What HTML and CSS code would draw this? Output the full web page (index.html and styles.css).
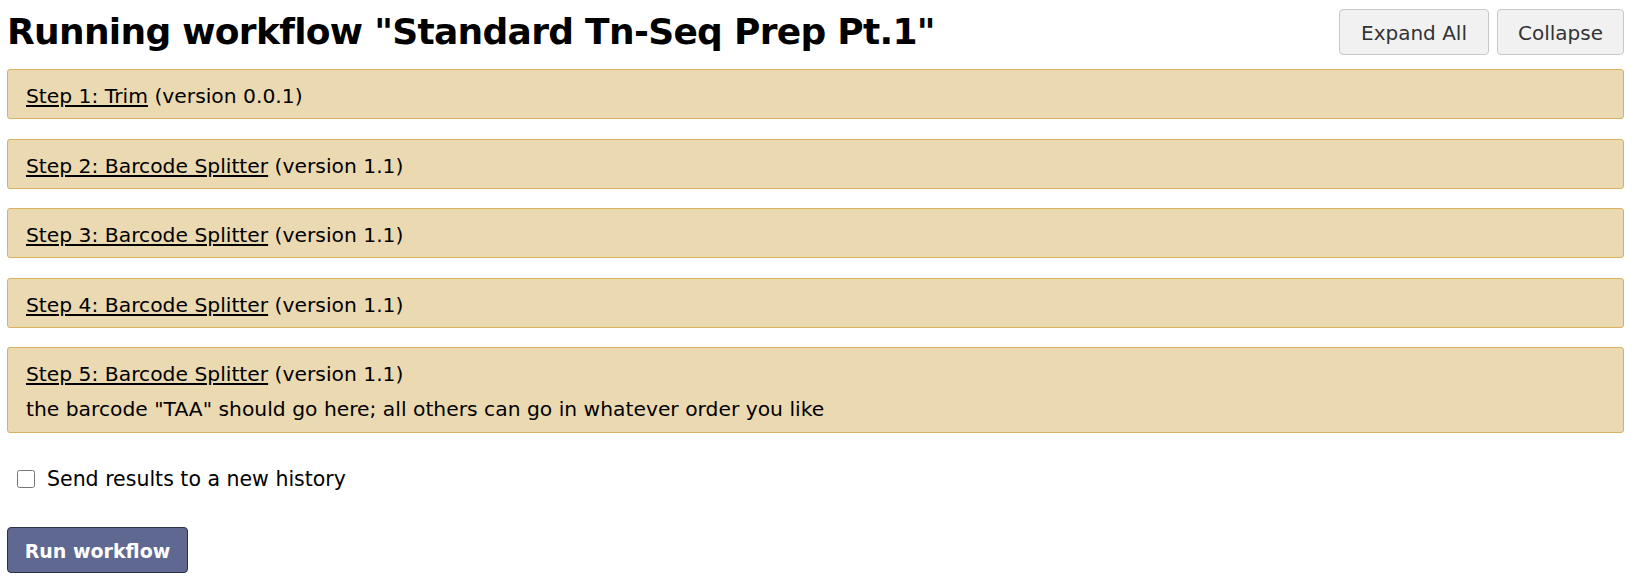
FILE: index.html
```html
<!DOCTYPE html>
<html>
<head>
<meta charset="utf-8">
<link rel="stylesheet" href="styles.css">
</head>
<body>
<div class="page">
  <div class="top">
    <h1 class="title">Running workflow "Standard Tn-Seq Prep Pt.1"</h1>
    <div class="actions">
      <button class="btn">Expand All</button>
      <button class="btn">Collapse</button>
    </div>
  </div>
  <div class="steps">
    <div class="step"><div class="step-title"><a href="#">Step 1: Trim</a> (version 0.0.1)</div></div>
    <div class="step"><div class="step-title"><a href="#">Step 2: Barcode Splitter</a> (version 1.1)</div></div>
    <div class="step"><div class="step-title"><a href="#">Step 3: Barcode Splitter</a> (version 1.1)</div></div>
    <div class="step"><div class="step-title"><a href="#">Step 4: Barcode Splitter</a> (version 1.1)</div></div>
    <div class="step">
      <div class="step-title"><a href="#">Step 5: Barcode Splitter</a> (version 1.1)</div>
      <div class="step-note">the barcode "TAA" should go here; all others can go in whatever order you like</div>
    </div>
  </div>
  <label class="send"><input type="checkbox" class="check"><span>Send results to a new history</span></label>
  <div class="run-row"><button class="run">Run workflow</button></div>
</div>
</body>
</html>
```
FILE: styles.css
```css
html, body {
  margin: 0;
  padding: 0;
  background: #fff;
}
body {
  font-family: "DejaVu Sans", "Liberation Sans", sans-serif;
  color: #000;
}
.page {
  padding: 0 14px 0 7px;
}
.top {
  display: flex;
  justify-content: space-between;
  align-items: flex-start;
  height: 69px;
}
.title {
  margin: 0;
  padding-top: 10px;
  font-size: 36px;
  line-height: 44px;
  font-weight: bold;
  letter-spacing: -0.7px;
}
.actions {
  display: flex;
  gap: 8px;
  padding-top: 9px;
}
.btn {
  font-family: inherit;
  font-size: 20px;
  color: #333;
  background: #f1f1f1;
  border: 1px solid #c8c8c8;
  border-radius: 4px;
  height: 46px;
  padding: 2px 8px 0;
}
.btn:first-child { width: 150px; }
.btn:last-child { width: 127px; }
.steps {
  display: flex;
  flex-direction: column;
  gap: 19.5px;
}
.step {
  background: #ebd9b2;
  border: 1px solid #d8b163;
  border-radius: 3px;
  padding: 12px 18px 8px 18px;
  font-size: 20.3px;
  line-height: 28px;
}
.step a {
  color: #000;
  text-decoration: underline;
}
.step-note {
  margin-top: 7px;
  padding-bottom: 1px;
}
.send {
  display: flex;
  align-items: center;
  margin-top: 34px;
  font-size: 20.5px;
  line-height: 24px;
}
.check {
  width: 18px;
  height: 18px;
  margin: 0 12px 0 10px;
}
.run-row {
  margin-top: 36px;
}
.run {
  font-family: inherit;
  font-size: 19px;
  font-weight: bold;
  color: #fff;
  background: #5f6890;
  border: 1px solid #2c3246;
  border-radius: 4px;
  width: 181px;
  height: 46px;
  padding: 1px 0 0;
}
```
